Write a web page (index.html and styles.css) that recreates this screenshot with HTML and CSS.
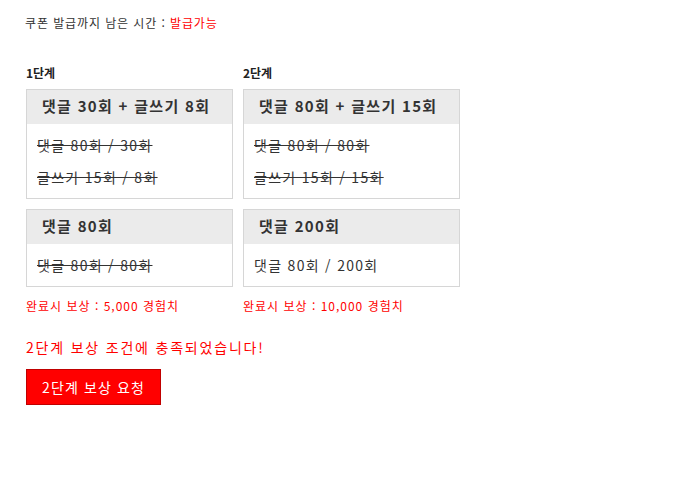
FILE: index.html
```html
<!DOCTYPE html>
<html lang="ko">
<head>
<meta charset="utf-8">
<link rel="stylesheet" href="styles.css">
</head>
<body>
<div class="page">
  <p class="timer">쿠폰 발급까지 남은 시간 : <span class="red">발급가능</span></p>
  <div class="stages">
    <div class="stage stage1">
      <div class="label">1단계</div>
      <div class="box">
        <div class="head">댓글 30회 + 글쓰기 8회</div>
        <div class="body">
          <div class="item done">댓글 80회 / 30회</div>
          <div class="item done">글쓰기 15회 / 8회</div>
        </div>
      </div>
      <div class="box">
        <div class="head">댓글 80회</div>
        <div class="body">
          <div class="item done">댓글 80회 / 80회</div>
        </div>
      </div>
      <div class="reward">완료시 보상 : 5,000 경험치</div>
    </div>
    <div class="stage stage2">
      <div class="label">2단계</div>
      <div class="box">
        <div class="head">댓글 80회 + 글쓰기 15회</div>
        <div class="body">
          <div class="item done">댓글 80회 / 80회</div>
          <div class="item done">글쓰기 15회 / 15회</div>
        </div>
      </div>
      <div class="box">
        <div class="head">댓글 200회</div>
        <div class="body">
          <div class="item">댓글 80회 / 200회</div>
        </div>
      </div>
      <div class="reward">완료시 보상 : 10,000 경험치</div>
    </div>
  </div>
  <p class="msg">2단계 보상 조건에 충족되었습니다!</p>
  <button class="btn" type="button">2단계 보상 요청</button>
</div>
</body>
</html>
```
FILE: styles.css
```css
html, body {
  margin: 0;
  padding: 0;
  background: #fff;
}
body {
  font-family: "Noto Sans CJK KR", "DejaVu Sans", sans-serif;
  color: #333;
}
.page {
  padding: 15px 26px 0 26px;
}
.timer {
  margin: 0 0 0 -1px;
  font-size: 12px;
  line-height: 16px;
  letter-spacing: 0.9px;
  color: #333;
}
.red { color: #ff0000; }
.stages {
  display: flex;
  gap: 10px;
  margin-top: 33px;
}
.stage1 { width: 207px; }
.stage2 { width: 217px; }
.stage {
  display: flex;
  flex-direction: column;
}
.label {
  font-size: 12px;
  font-weight: bold;
  line-height: 17px;
  margin-bottom: 8px;
  color: #222;
}
.box {
  border: 1px solid #d6d6d6;
  background: #fff;
}
.box + .box {
  margin-top: 10px;
}
.head {
  background: #ebebeb;
  height: 34px;
  line-height: 32px;
  padding-left: 15px;
  font-size: 15px;
  font-weight: bold;
  letter-spacing: 1.3px;
  color: #333;
  white-space: nowrap;
}
.body {
  padding: 5px 10px 5px 10px;
}
.item {
  font-size: 14px;
  line-height: 32px;
  letter-spacing: 1.3px;
  color: #333;
  white-space: nowrap;
}
.item.done {
  text-decoration: line-through;
}
.reward {
  margin-top: 11px;
  font-size: 12px;
  line-height: 16px;
  letter-spacing: 1px;
  color: #ff0000;
  white-space: nowrap;
}
.msg {
  margin: 24px 0 0 0;
  font-size: 14px;
  line-height: 18px;
  letter-spacing: 1.8px;
  color: #ff0000;
}
.btn {
  margin-top: 13px;
  width: 135px;
  height: 36px;
  background: #ff0000;
  border: 1px solid #c00000;
  color: #fff;
  font-family: "Noto Sans CJK KR", "DejaVu Sans", sans-serif;
  font-size: 14px;
  letter-spacing: 1.1px;
  padding: 0;
  display: block;
}
```
